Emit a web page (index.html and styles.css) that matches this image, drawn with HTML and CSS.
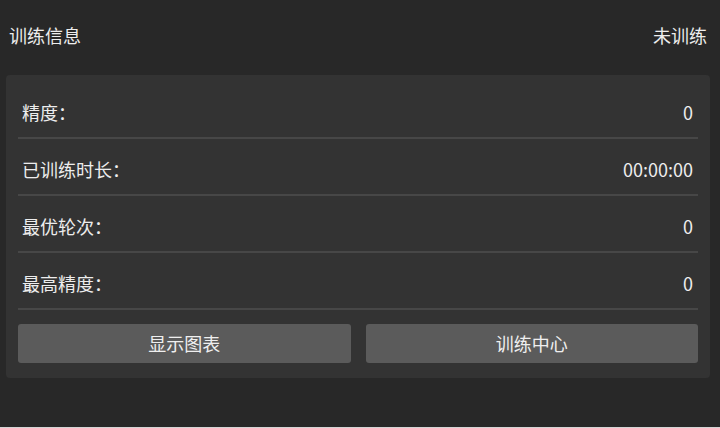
FILE: index.html
```html
<!DOCTYPE html>
<html lang="zh-CN">
<head>
    <meta charset="utf-8">
    <link rel="stylesheet" href="styles.css">
</head>
<body>
    <div class="page">
        <div class="header">
            <span class="title">训练信息</span>
            <span class="status">未训练</span>
        </div>
        <div class="panel">
            <div class="info-row">
                <span>精度：</span>
                <span>0</span>
            </div>
            <div class="info-row">
                <span>已训练时长：</span>
                <span>00:00:00</span>
            </div>
            <div class="info-row">
                <span>最优轮次：</span>
                <span>0</span>
            </div>
            <div class="info-row">
                <span>最高精度：</span>
                <span>0</span>
            </div>
            <div class="actions">
                <button class="btn">显示图表</button>
                <button class="btn">训练中心</button>
            </div>
        </div>
    </div>
</body>
</html>
```

FILE: styles.css
```css
body {
    margin: 0;
    padding: 0;
    background-color: #282828;
    font-family: "Noto Sans CJK SC", "Noto Sans", sans-serif;
    font-size: 18px;
    color: #ededed;
}

.page {
    height: 427px;
    border-bottom: 1px solid #d4d4d4;
}

.header {
    height: 75px;
    box-sizing: border-box;
    display: flex;
    align-items: center;
    justify-content: space-between;
    padding: 0 13px 4px 9px;
    line-height: 23px;
}

.panel {
    margin: 0 10px 0 6px;
    padding: 7px 12px 15px;
    background-color: #333333;
    border-radius: 4px;
}

.info-row {
    height: 57px;
    box-sizing: border-box;
    display: flex;
    justify-content: space-between;
    padding: 19px 5px 13px 4px;
    line-height: 23px;
    border-bottom: 2px solid #474747;
}

.actions {
    display: grid;
    grid-template-columns: 1fr 1fr;
    gap: 15px;
    margin-top: 14px;
}

.btn {
    height: 39px;
    border: none;
    border-radius: 3px;
    background-color: #5b5b5b;
    color: #efefef;
    font-family: inherit;
    font-size: 18px;
    padding: 0 0 2px;
    cursor: pointer;
}

.btn:hover {
    background-color: #666666;
}
```
